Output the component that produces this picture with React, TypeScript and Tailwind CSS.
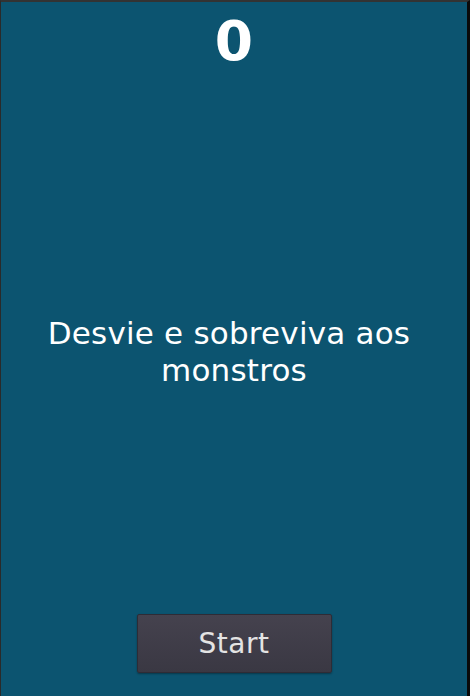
import React, { useState } from 'react';

const App: React.FC = () => {
  const [score] = useState(0);

  return (
    <div
      className="flex flex-col h-[696px] w-[470px] bg-[#0c5470] border-t-2 border-t-[#333333] border-l border-l-[#2a2a2a] border-r-[3px] border-r-[#0a0a0a] overflow-hidden"
      style={{ fontFamily: '"DejaVu Sans", "Liberation Sans", sans-serif' }}
    >
      {/* Score */}
      <div className="pt-3 text-center text-white font-bold text-[55px] leading-none">
        {score}
      </div>

      {/* Message */}
      <div className="mt-[246px] px-4 text-center text-white text-[31px] leading-[37px] tracking-[0.2px]">
        Desvie e sobreviva aos&nbsp;
        <br />
        monstros
      </div>

      {/* Start button */}
      <button className="mt-[225px] mx-auto w-[195px] h-[59px] rounded-[2px] border border-[#2e2c36] bg-gradient-to-b from-[#45424e] to-[#3a3843] shadow-[0_1px_2px_rgba(0,0,0,0.35)] text-[#e4e4e4] text-[28px] leading-none tracking-[0.5px]">
        Start
      </button>
    </div>
  );
};

export default App;
